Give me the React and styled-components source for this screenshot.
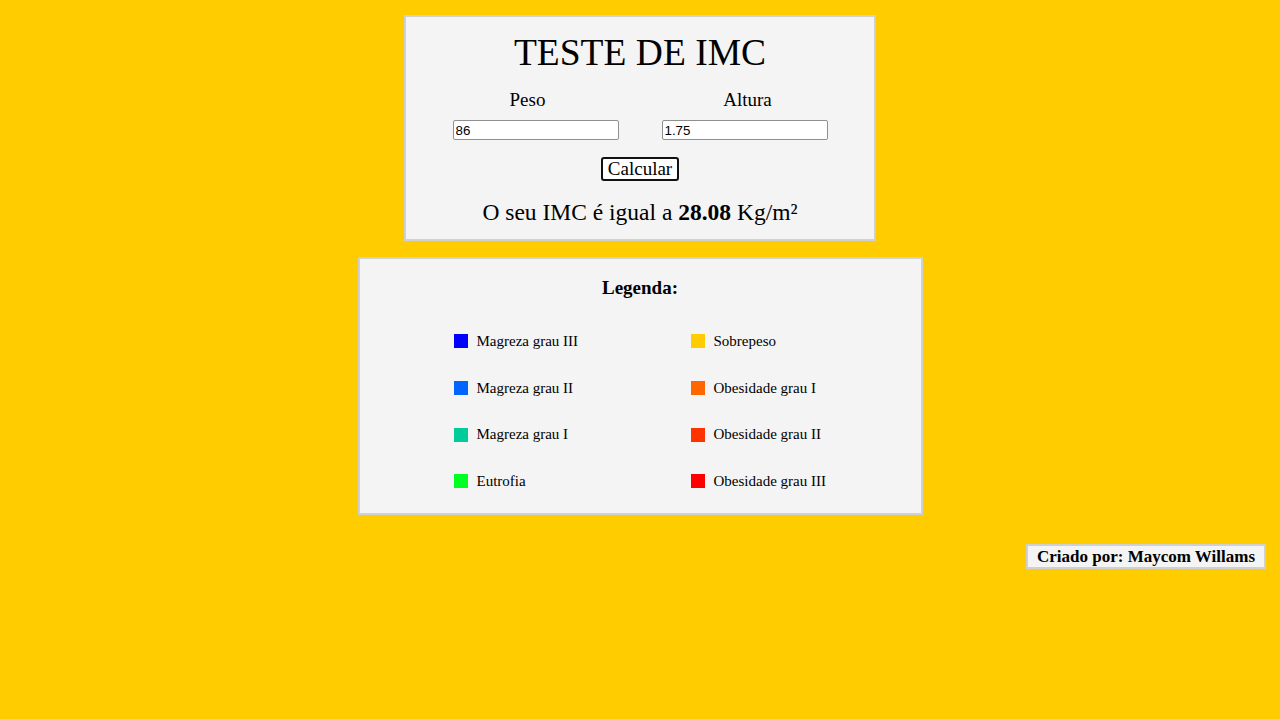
import React from "react";
import styled, { createGlobalStyle } from "styled-components";

const GlobalStyle = createGlobalStyle`
  html, body {
    margin: 0;
    padding: 0;
    background-color: #ffcc00;
    font-family: "Liberation Serif", "Times New Roman", serif;
    color: #000;
  }
`;

const Page = styled.div`
  min-height: 719px;
  padding-top: 15px;
  box-sizing: border-box;
  display: flex;
  flex-direction: column;
  align-items: center;
`;

const Card = styled.div`
  box-sizing: border-box;
  width: ${(p) => p.width}px;
  background-color: #f4f4f4;
  border: 2px solid #d0d0d0;
`;

const Calc = styled(Card)`
  padding: 15px 0 0;
  height: 226px;
  display: flex;
  flex-direction: column;
  align-items: center;
`;

const Title = styled.h1`
  margin: 0;
  font-size: 37.5px;
  font-weight: 400;
  line-height: 42px;
`;

const Fields = styled.div`
  display: grid;
  grid-template-columns: 166px 166px;
  column-gap: 43px;
  margin-top: 15px;
`;

const Field = styled.div`
  display: flex;
  flex-direction: column;
  align-items: center;
`;

const Label = styled.label`
  font-size: 19px;
  line-height: 22px;
  margin-bottom: 9px;
  transform: translateX(${(p) => p.shift}px);
`;

const Input = styled.input`
  box-sizing: border-box;
  width: 166px;
  height: 20px;
  padding: 1px 2px;
  border: 1px solid #8f8f8f;
  border-radius: 2px;
  background: #fff;
  font-family: "Liberation Sans", Arial, sans-serif;
  font-size: 13.33px;
  color: #000;
`;

const Button = styled.button`
  margin-top: 17px;
  box-sizing: border-box;
  height: 24px;
  padding: 0 5px;
  border: 2px solid #111;
  border-radius: 3px;
  background: #fff;
  font-family: "Liberation Serif", "Times New Roman", serif;
  font-size: 19px;
  line-height: 18px;
  color: #000;
`;

const Result = styled.p`
  margin: 17px 0 0;
  font-size: 23.5px;
  line-height: 28px;
`;

const Legend = styled(Card)`
  margin-top: 16px;
  height: 258px;
  padding: 17px 0 0;
`;

const LegendTitle = styled.h3`
  margin: 0;
  text-align: center;
  font-size: 19px;
  line-height: 24px;
  font-weight: 700;
`;

const LegendGrid = styled.div`
  display: grid;
  grid-template-columns: 237px 237px;
  grid-auto-rows: 46.7px;
  padding-left: 94px;
  margin-top: 18px;
`;

const Item = styled.div`
  display: flex;
  align-items: center;
  font-size: 15px;
`;

const Swatch = styled.span`
  width: 14px;
  height: 14px;
  margin-right: 9px;
  background-color: ${(p) => p.color};
`;

const Footer = styled.div`
  align-self: flex-end;
  margin: 29px 14px 0 0;
  box-sizing: border-box;
  height: 25px;
  padding: 0 9px;
  border: 2px solid #d0d0d0;
  background-color: #f4f4f4;
  font-size: 17px;
  font-weight: 700;
  line-height: 21px;
`;

const left = [
  ["#0000ff", "Magreza grau III"],
  ["#0066ff", "Magreza grau II"],
  ["#00cc99", "Magreza grau I"],
  ["#00ff22", "Eutrofia"],
];
const right = [
  ["#ffcc00", "Sobrepeso"],
  ["#ff6600", "Obesidade grau I"],
  ["#ff3300", "Obesidade grau II"],
  ["#ff0000", "Obesidade grau III"],
];

export default function App() {
  const rows = left.flatMap((l, i) => [l, right[i]]);
  return (
    <>
      <GlobalStyle />
      <Page>
        <Calc width={472}>
          <Title>TESTE DE IMC</Title>
          <Fields>
            <Field>
              <Label shift={-8}>Peso</Label>
              <Input defaultValue="86" />
            </Field>
            <Field>
              <Label shift={3}>Altura</Label>
              <Input defaultValue="1.75" />
            </Field>
          </Fields>
          <Button>Calcular</Button>
          <Result>
            O seu IMC é igual a <b>28.08</b> Kg/m²
          </Result>
        </Calc>
        <Legend width={565}>
          <LegendTitle>Legenda:</LegendTitle>
          <LegendGrid>
            {rows.map(([color, text]) => (
              <Item key={text}>
                <Swatch color={color} />
                {text}
              </Item>
            ))}
          </LegendGrid>
        </Legend>
        <Footer>Criado por: Maycom Willams</Footer>
      </Page>
    </>
  );
}
